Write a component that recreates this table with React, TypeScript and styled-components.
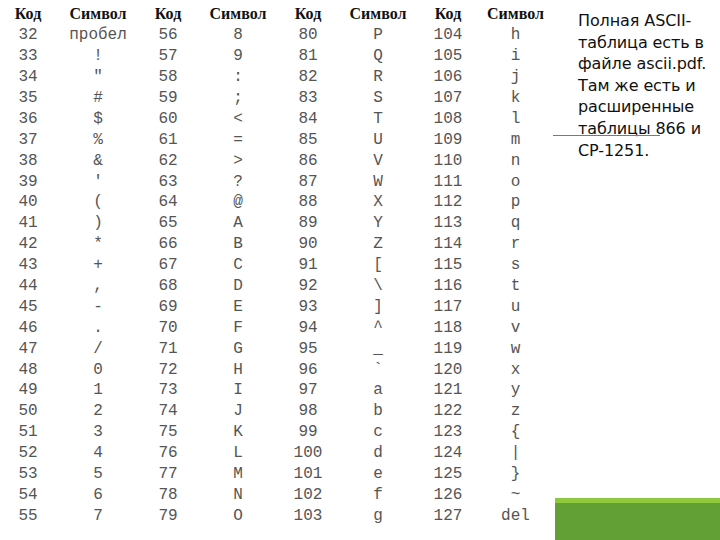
import React from "react";
import styled, { createGlobalStyle } from "styled-components";

const GlobalStyle = createGlobalStyle`
  html, body {
    margin: 0;
    padding: 0;
    background: #ffffff;
  }
  body {
    width: 720px;
    height: 540px;
    overflow: hidden;
  }
`;

const symbolFor = (code: number): string => {
  if (code === 32) return "пробел";
  if (code === 127) return "del";
  return String.fromCharCode(code);
};

const rows = Array.from({ length: 24 }, (_, i) => i);
const groups = [32, 56, 80, 104];

const App: React.FC = () => {
  return (
    <>
      <GlobalStyle />
      <Slide>
        <Table>
          {groups.map((g) => (
            <React.Fragment key={`h${g}`}>
              <HeadCell>Код</HeadCell>
              <HeadCell>Символ</HeadCell>
            </React.Fragment>
          ))}
          {rows.map((r) =>
            groups.map((g) => (
              <React.Fragment key={`${r}-${g}`}>
                <Cell>{g + r}</Cell>
                <Cell>{symbolFor(g + r)}</Cell>
              </React.Fragment>
            ))
          )}
        </Table>
        <Side>
          <Note>
            Полная ASCII-
            <br />
            таблица есть в
            <br />
            файле ascii.pdf.
            <br />
            Там же есть и
            <br />
            расширенные
            <br />
            таблицы 866 и
            <br />
            CP-1251.
          </Note>
          <Rule />
          <GreenBar />
        </Side>
      </Slide>
    </>
  );
};

const Slide = styled.div`
  display: flex;
  width: 720px;
  height: 540px;
  background: #ffffff;
`;

const Table = styled.div`
  display: grid;
  grid-template-columns: 56px 84px 56px 84px 56px 84px 56px 79px;
  grid-auto-rows: 20.9px;
  padding-top: 4px;
  width: 555px;
  flex-shrink: 0;
`;

const HeadCell = styled.div`
  display: flex;
  align-items: center;
  justify-content: center;
  font-family: "Liberation Serif", "Times New Roman", serif;
  font-weight: 700;
  font-size: 16px;
  color: #111111;
  white-space: nowrap;
`;

const Cell = styled.div`
  display: flex;
  align-items: center;
  justify-content: center;
  font-family: "Liberation Mono", "Courier New", monospace;
  font-size: 16px;
  color: #555555;
  white-space: pre;
`;

const Side = styled.div`
  position: relative;
  flex: 1;
  display: flex;
  flex-direction: column;
  justify-content: space-between;
`;

const Note = styled.p`
  margin: 0;
  padding: 10px 0 0 23px;
  font-family: "DejaVu Sans", Verdana, sans-serif;
  font-size: 16px;
  line-height: 21.6px;
  letter-spacing: -0.1px;
  color: #111111;
  white-space: nowrap;
`;

const Rule = styled.div`
  position: absolute;
  left: -2px;
  top: 135px;
  width: 107px;
  height: 1px;
  background: #7a7a7a;
`;

const GreenBar = styled.div`
  height: 42px;
  background: #62a035;
  border-top: 5px solid #8fc83c;
  box-sizing: border-box;
`;

export default App;
